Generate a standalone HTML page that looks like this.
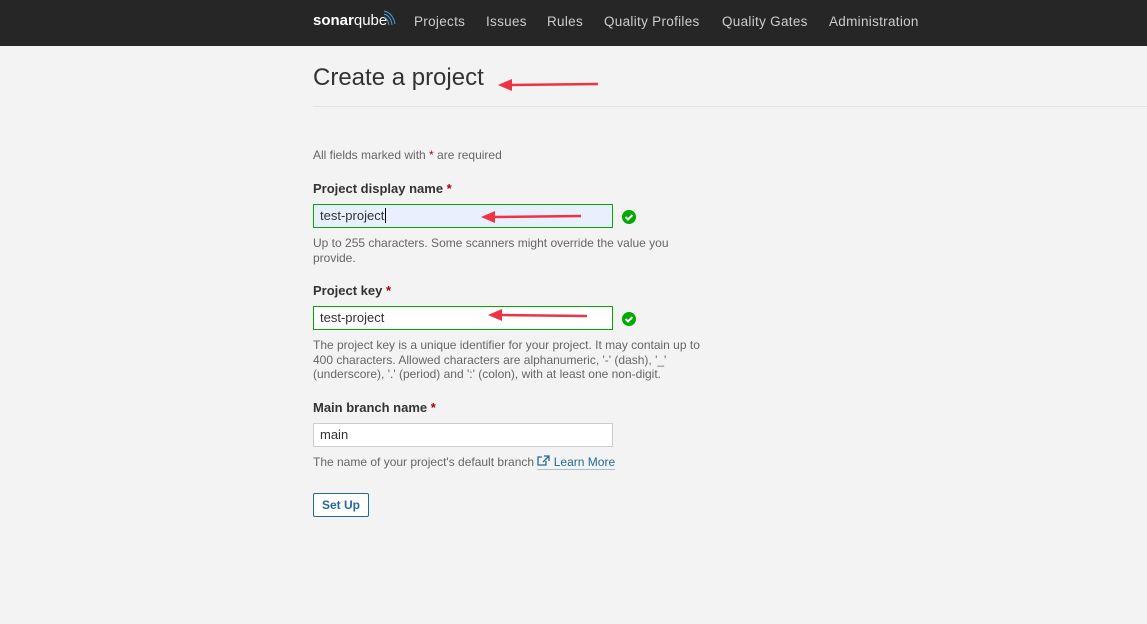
<!DOCTYPE html>
<html><head><meta charset="utf-8"><style>
*{box-sizing:border-box;margin:0;padding:0}
body{width:1147px;height:624px;background:#f3f3f3;font-family:"Liberation Sans",sans-serif;color:#333;position:relative;overflow:hidden}
.nav{position:absolute;left:0;top:0;width:1147px;height:46px;background:#262626}
.nav a{position:absolute;top:14px;color:#ccc;font-size:13.5px;letter-spacing:.3px;text-decoration:none}
.logo{position:absolute;left:313px;top:12px;color:#fff;font-size:15px}
h1{position:absolute;left:313px;top:64px;font-size:24px;font-weight:400;color:#333}
.hr{position:absolute;left:313px;top:106px;width:834px;height:1px;background:#e2e2e2}
.t{position:absolute;left:313px;font-size:12px;color:#666;line-height:14.5px}
.l{position:absolute;left:313px;font-size:13px;font-weight:bold;color:#333}
.r{color:#a4030f}
.in{position:absolute;left:313px;width:300px;height:24px;border:1px solid #ccc;background:#fff;font-size:13px;padding:3px 6px;color:#333}
.ok{border-color:#00aa00}
.chk{position:absolute;left:622px}
.btn{position:absolute;left:313px;top:493px;width:56px;height:24px;border:1px solid #236a97;border-radius:2px;color:#236a97;font-weight:bold;font-size:12px;text-align:center;line-height:22px;background:#fff}
</style></head><body>
<div class="nav">
<div class="logo"><b>sonar</b>qube<svg width="14" height="16" style="position:absolute;left:70px;top:-2px" viewBox="0 0 14 16"><path d="M1 1Q10 3 12 14M1 4Q8 6 9 15M1 7Q5 9 6 15" stroke="#4b9fd5" fill="none" stroke-width="1"/></svg></div>
<a style="left:414px">Projects</a><a style="left:486px">Issues</a><a style="left:547px">Rules</a><a style="left:604px">Quality Profiles</a><a style="left:722px">Quality Gates</a><a style="left:829px">Administration</a>
</div>
<h1>Create a project</h1>
<div class="hr"></div>
<div class="t" style="top:148px">All fields marked with <span class="r">*</span> are required</div>
<div class="l" style="top:181px">Project display name <span class="r">*</span></div>
<div class="in ok" style="top:204px;background:#e8f0fe">test-project<span style="border-left:1px solid #000;margin-left:1px"></span></div>
<svg class="chk" style="top:210px" width="14" height="14"><circle cx="7" cy="7" r="7" fill="#00aa00"/><path d="M3.5 7l2.5 2.5 4.5-4.5" stroke="#fff" stroke-width="2" fill="none"/></svg>
<div class="t" style="top:236px">Up to 255 characters. Some scanners might override the value you<br>provide.</div>
<div class="l" style="top:283px">Project key <span class="r">*</span></div>
<div class="in ok" style="top:306px">test-project</div>
<svg class="chk" style="top:312px" width="14" height="14"><circle cx="7" cy="7" r="7" fill="#00aa00"/><path d="M3.5 7l2.5 2.5 4.5-4.5" stroke="#fff" stroke-width="2" fill="none"/></svg>
<div class="t" style="top:338px">The project key is a unique identifier for your project. It may contain up to<br>400 characters. Allowed characters are alphanumeric, '-' (dash), '_'<br>(underscore), '.' (period) and ':' (colon), with at least one non-digit.</div>
<div class="l" style="top:400px">Main branch name <span class="r">*</span></div>
<div class="in" style="top:423px">main</div>
<div class="t" style="top:455px">The name of your project's default branch <span style="color:#236a97;border-bottom:1px solid #9fc3dc"><svg width="13" height="11" viewBox="0 0 13 11"><path d="M9 6v4H1V2h4M7 1h5v5M12 1L6 7" stroke="#236a97" fill="none" stroke-width="1.3"/></svg> Learn More</span></div>
<div class="btn">Set Up</div>
<svg style="position:absolute;left:0;top:0" width="1147" height="624">
<g fill="#ee3344" stroke="#ee3344" stroke-width="2.5">
<line x1="510" y1="85" x2="598" y2="84"/><path d="M498 85l14-6v12z" stroke="none"/>
<line x1="494" y1="217" x2="581" y2="216"/><path d="M481 217l14-6v12z" stroke="none"/>
<line x1="500" y1="315" x2="587" y2="316"/><path d="M488 315l14-6v12z" stroke="none"/>
</g></svg>
</body></html>
